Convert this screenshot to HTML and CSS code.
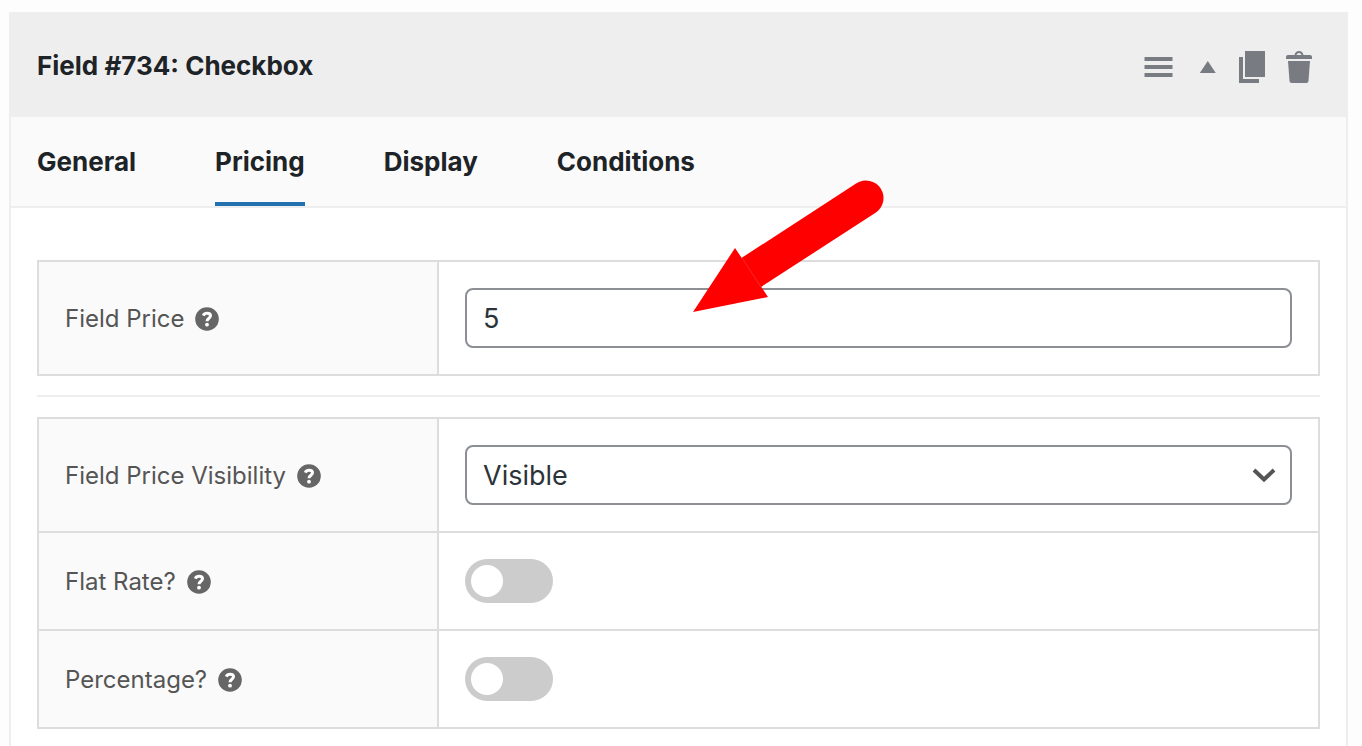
FILE: index.html
```
<!DOCTYPE html>
<html lang="en">
<head>
    <meta charset="UTF-8">
    <meta name="viewport" content="width=device-width, initial-scale=1.0">
    <title>Field #734: Checkbox</title>
    <link rel="stylesheet" href="styles.css">
</head>
<body>
    <svg class="sprite" aria-hidden="true">
        <symbol id="help-icon" viewBox="0 0 24 24">
            <circle cx="12" cy="12" r="11.800" fill="#666"/>
            <path d="M8.300 8.600C9 6.900 10.400 6.200 12.200 6.200C14.300 6.200 15.500 7.200 15.500 8.800C15.500 11.300 12 11.200 12 14.300" fill="none" stroke="#fff" stroke-width="3"/>
            <circle cx="12" cy="17.700" r="1.900" fill="#fff"/>
        </symbol>
    </svg>

    <div class="panel">
        <div class="panel-header">
            <h2>Field #734: Checkbox</h2>
            <div class="actions">
                <button type="button" aria-label="Move field">
                    <svg width="30" height="32" viewBox="0 0 30 32"><path d="M0.500 6H28.500V10H0.500ZM0.500 14H28.500V18H0.500ZM0.500 22H28.500V26H0.500Z"/></svg>
                </button>
                <button type="button" aria-label="Collapse field">
                    <svg width="24" height="32" viewBox="0 0 24 32"><path d="M13.800 10L21.800 22H5.800Z"/></svg>
                </button>
                <button type="button" aria-label="Duplicate field">
                    <svg width="28" height="32" viewBox="0 0 28 32"><path d="M7 0H27V26H7ZM1 6H5V28H21V32H1Z"/></svg>
                </button>
                <button type="button" aria-label="Delete field">
                    <svg width="26" height="32" viewBox="0 0 26 32">
                        <path d="M8.500 4C9 1.300 10.700 0 13 0S17 1.300 17.500 4H24Q26 4 26 6V8H0V6Q0 4 2 4ZM10.500 4H15.500C15 2.700 14.200 2 13 2S11 2.700 10.500 4Z"/>
                        <path d="M2 10H24L22.500 30Q22.300 32 20.500 32H5.500Q3.700 32 3.500 30Z"/>
                    </svg>
                </button>
            </div>
        </div>

        <nav class="tabs">
            <a href="#general">General</a>
            <a href="#pricing" class="active">Pricing</a>
            <a href="#display">Display</a>
            <a href="#conditions">Conditions</a>
        </nav>

        <div class="panel-body">
            <table class="options">
                <tr>
                    <th scope="row">
                        <div class="option-label">
                            <label for="field-price">Field Price</label>
                            <svg class="help"><use href="#help-icon"/></svg>
                        </div>
                    </th>
                    <td>
                        <div class="control">
                            <input type="text" id="field-price" class="text-input" value="5">
                            <svg class="arrow" viewBox="0 0 200 140" aria-hidden="true">
                                <path class="shaft" d="M62 97L176 23"/>
                                <path class="head" d="M3 137L45 73L78 122Z"/>
                                <path class="seam" d="M52 83L71 112"/>
                            </svg>
                        </div>
                    </td>
                </tr>
            </table>

            <hr>

            <table class="options">
                <tr>
                    <th scope="row">
                        <div class="option-label">
                            <label for="visibility">Field Price Visibility</label>
                            <svg class="help"><use href="#help-icon"/></svg>
                        </div>
                    </th>
                    <td>
                        <div class="control">
                            <select id="visibility" class="text-input">
                                <option>Visible</option>
                                <option>Hidden</option>
                            </select>
                            <svg class="chevron" viewBox="0 0 24 16" aria-hidden="true"><path d="M2 3L12 12.500L22 3"/></svg>
                        </div>
                    </td>
                </tr>
                <tr>
                    <th scope="row">
                        <div class="option-label">
                            <label for="flat-rate">Flat Rate?</label>
                            <svg class="help"><use href="#help-icon"/></svg>
                        </div>
                    </th>
                    <td><input type="checkbox" id="flat-rate" class="toggle"></td>
                </tr>
                <tr>
                    <th scope="row">
                        <div class="option-label">
                            <label for="percentage">Percentage?</label>
                            <svg class="help"><use href="#help-icon"/></svg>
                        </div>
                    </th>
                    <td><input type="checkbox" id="percentage" class="toggle"></td>
                </tr>
            </table>
        </div>
    </div>
</body>
</html>
```
FILE: styles.css
```
* {
    box-sizing: border-box;
}

body {
    margin: 0;
    padding: 12px 14px 0 9px;
    min-height: 100vh;
    display: flex;
    flex-direction: column;
    background-color: #fdfdfd;
    color: #1d2327;
    font-family: Inter, "Liberation Sans", sans-serif;
    font-size: 24px;
}

.sprite {
    display: none;
}

.panel {
    flex: 1;
    background-color: #fff;
    border: 2px solid #eee;
    border-bottom: none;
}

.panel-header {
    display: flex;
    justify-content: space-between;
    align-items: center;
    height: 103px;
    padding: 0 34px 0 26px;
    background-color: #eee;
}

.panel-header h2 {
    margin: 0;
    font-size: 26px;
    font-weight: 700;
    line-height: 32px;
}

.actions {
    display: flex;
    gap: 20px;
    padding-top: 2px;
}

.actions button {
    padding: 0;
    border: none;
    background: none;
    cursor: pointer;
}

.actions svg {
    display: block;
    fill: #787c82;
}

.tabs {
    display: flex;
    gap: 79px;
    padding: 0 26px;
    background-color: #fafafa;
    border-bottom: 2px solid #eee;
}

.tabs a {
    padding: 29px 0 24px;
    border-bottom: 4px solid transparent;
    color: #1d2327;
    font-size: 26px;
    font-weight: 700;
    line-height: 32px;
    text-decoration: none;
}

.tabs a.active {
    border-bottom-color: #2271b1;
}

.panel-body {
    padding: 52px 26px 16px;
}

.options {
    width: 100%;
    table-layout: fixed;
    border-collapse: collapse;
}

.options th,
.options td {
    padding: 26px;
    border: 2px solid #ddd;
    text-align: left;
    vertical-align: middle;
}

.options th {
    width: 400px;
    background-color: #fafafa;
    color: #555;
    font-weight: 400;
}

.option-label {
    display: flex;
    align-items: center;
    gap: 11px;
    padding-top: 2px;
    line-height: 32px;
}

.help {
    width: 24px;
    height: 24px;
}

.control {
    position: relative;
}

.text-input {
    display: block;
    width: 100%;
    height: 60px;
    padding: 0 16px;
    border: 2px solid #8c8f94;
    border-radius: 8px;
    background-color: #fff;
    color: #2c3338;
    font-family: inherit;
    font-size: 27px;
    appearance: none;
}

.chevron {
    position: absolute;
    top: 22px;
    right: 16px;
    width: 24px;
    height: 16px;
    fill: none;
    stroke: #555;
    stroke-width: 4;
    pointer-events: none;
}

.arrow {
    position: absolute;
    top: -113px;
    left: 225px;
    width: 200px;
    height: 140px;
    pointer-events: none;
}

.arrow .shaft {
    fill: none;
    stroke: #f00;
    stroke-width: 35;
    stroke-linecap: round;
}

.arrow .head {
    fill: #f00;
}

.arrow .seam {
    stroke: #ff4d4d;
    stroke-width: 0.5;
}

.toggle {
    display: block;
    appearance: none;
    width: 88px;
    height: 44px;
    margin: 0;
    padding: 6px;
    border-radius: 22px;
    background-color: #ccc;
    cursor: pointer;
}

.toggle::before {
    content: "";
    display: block;
    width: 32px;
    height: 32px;
    border-radius: 50%;
    background-color: #fff;
}

.toggle:checked {
    background-color: #2271b1;
}

.toggle:checked::before {
    margin-left: auto;
}

hr {
    margin: 19px 0 20px;
    border: none;
    border-top: 2px solid #eee;
}
```
